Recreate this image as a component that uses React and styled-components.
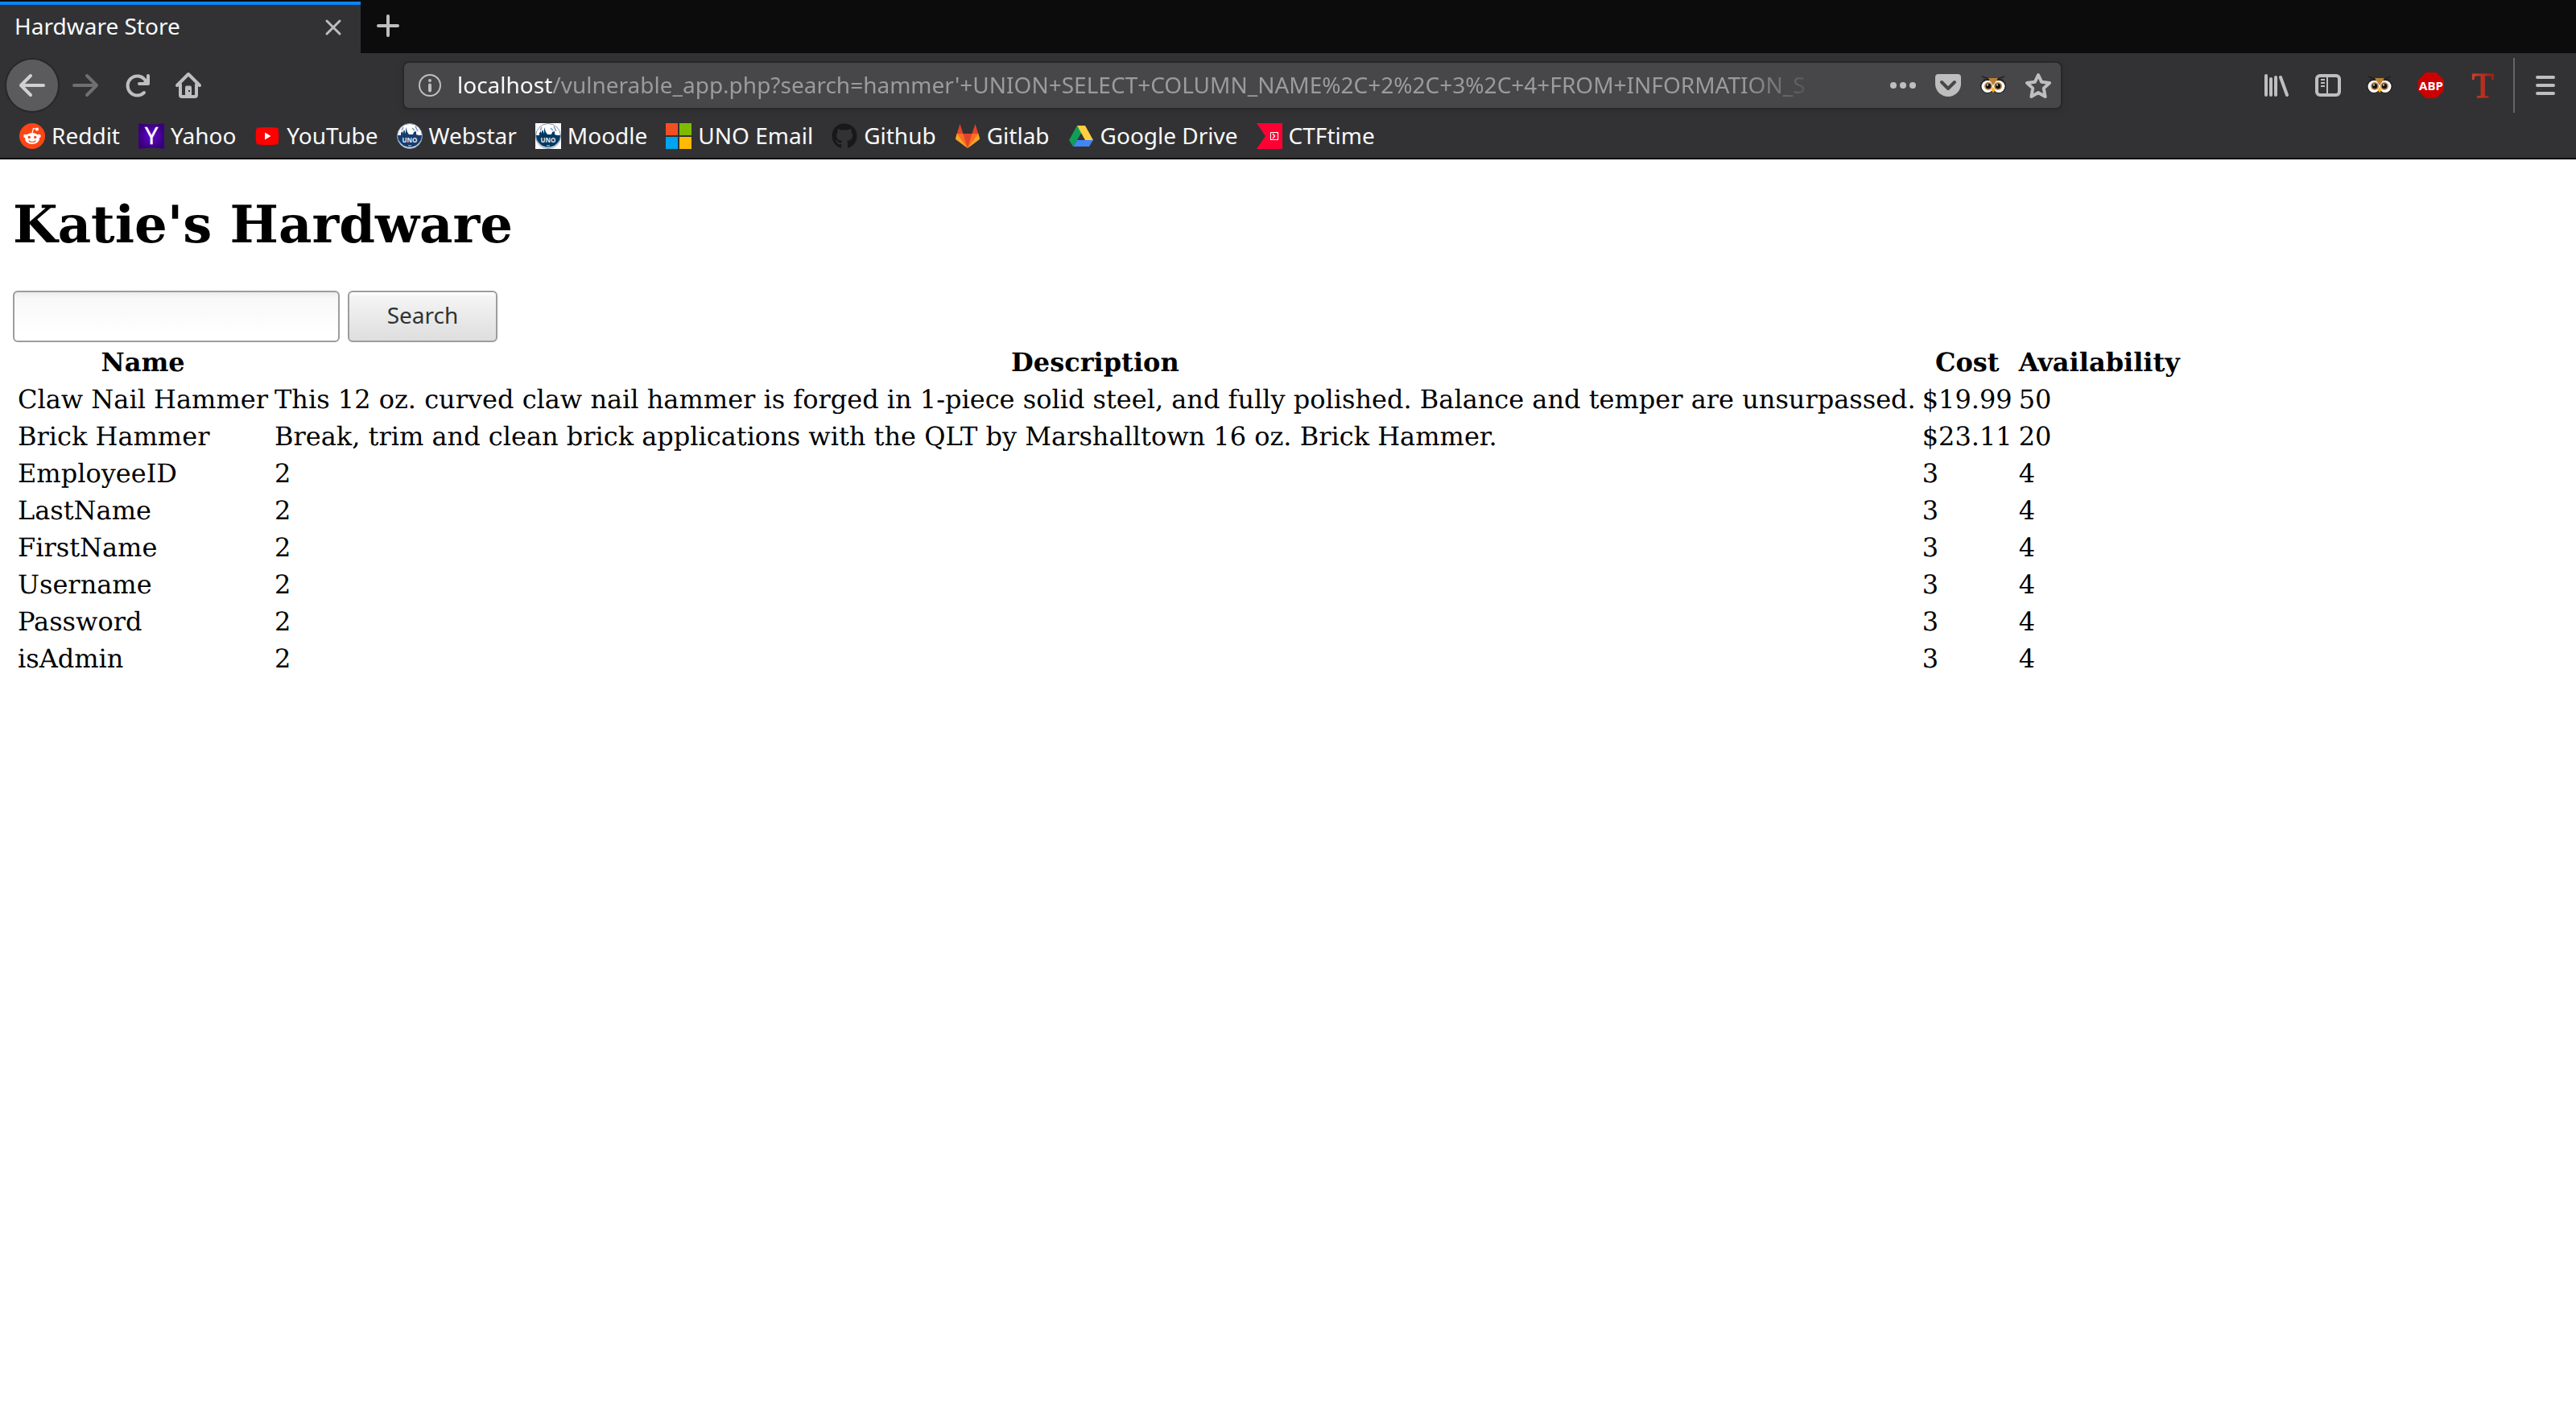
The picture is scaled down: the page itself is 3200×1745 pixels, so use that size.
import React from "react";
import styled, { createGlobalStyle } from "styled-components";
import { FaGithub } from "react-icons/fa";

const uiFont = '"Noto Sans", "Open Sans", sans-serif';
const pageFont = '"DejaVu Serif", "Liberation Serif", serif';

const GlobalStyle = createGlobalStyle`
  *, *::before, *::after { box-sizing: border-box; }
  body { margin: 0; background: #ffffff; }
  svg { display: block; flex: none; overflow: visible; }
`;

const Chrome = styled.header`
  background: #323234;
  border-bottom: 2px solid #0c0c0d;
  font-family: ${uiFont};
  font-size: 28px;
  line-height: 38px;
  color: #f9f9fa;
`;

const TabStrip = styled.div`
  display: flex;
  height: 66px;
  padding-top: 2px;
  background: #0c0c0d;
`;

const Tab = styled.div`
  display: flex;
  align-items: center;
  justify-content: space-between;
  width: 448px;
  padding: 0 16px 4px 18px;
  background: #323234;
  border-top: 4px solid #0a84ff;
`;

const TabTitle = styled.span`
  padding-bottom: 4px;
`;

const IconButton = styled.button`
  display: flex;
  align-items: center;
  justify-content: center;
  flex: none;
  width: ${(p) => p.$width || 64}px;
  height: ${(p) => p.$height || 64}px;
  padding: 0;
  border: 0;
  background: none;
  color: ${(p) => (p.$dim ? "#6f6f71" : "#bebebf")};
`;

const NewTabButton = styled(IconButton)`
  padding-bottom: 4px;
`;

const BackButton = styled(IconButton)`
  margin-right: 2px;
  border-radius: 50%;
  background: #5b5b5d;
  box-shadow: 0 0 0 2px #28282a;
  color: #d0d0d1;
`;

const NavBar = styled.nav`
  display: flex;
  align-items: center;
  height: 80px;
  padding: 0 6px 0 8px;
`;

const Spacer = styled.div`
  flex: 0 1 234px;
`;

const Address = styled.form`
  display: flex;
  align-items: center;
  flex: 1;
  min-width: 0;
  height: 60px;
  padding-left: 4px;
  border: 2px solid #28282a;
  border-radius: 8px;
  background: #474749;
  box-shadow: 0 2px 8px rgba(0, 0, 0, 0.1);
  color: #b1b1b3;
`;

const AddressText = styled.div`
  display: flex;
  flex: 1;
  min-width: 0;
  margin: 0 60px 0 6px;
  padding-bottom: 2px;
  mask-image: linear-gradient(to left, transparent 16px, #000 112px);
`;

const Host = styled.label`
  color: #f9f9fa;
`;

const Path = styled.input`
  flex: 1;
  min-width: 0;
  height: 38px;
  padding: 0;
  border: 0;
  outline: 0;
  background: none;
  color: #9b9b9d;
  font: inherit;
`;

const Divider = styled.div`
  width: 2px;
  height: 68px;
  margin: 0 6px;
  background: #656567;
`;

const Bookmarks = styled.nav`
  display: flex;
  gap: 23px;
  height: 50px;
  padding: 4px 24px 0;
`;

const Bookmark = styled.a`
  display: flex;
  align-items: center;
  gap: 8px;
  height: 38px;
  color: inherit;
  text-decoration: none;
  white-space: nowrap;
`;

const BookmarkLabel = styled.span`
  padding-bottom: 2px;
`;

const Page = styled.main`
  padding: 0 16px;
  font-family: ${pageFont};
  font-size: 32px;
  line-height: 38px;
  text-rendering: geometricPrecision;
  color: #000000;
`;

const Heading = styled.h1`
  margin: 0;
  padding: 44px 0 43px;
  font-size: 64px;
  line-height: 76px;
`;

const SearchForm = styled.form`
  display: flex;
  gap: 10px;
`;

const SearchInput = styled.input`
  width: 406px;
  height: 64px;
  padding: 0 12px;
  border: 2px solid #9d9d9d;
  border-radius: 6px;
  background: linear-gradient(#ececec, #f8f8f8 12%, #ffffff 90%);
  font-family: ${uiFont};
  font-size: 28px;
`;

const SearchButton = styled.button`
  width: 186px;
  height: 64px;
  padding: 0 0 4px;
  border: 2px solid #9d9d9d;
  border-radius: 6px;
  background: linear-gradient(#ffffff, #f4f4f4 10%, #dedede);
  color: #2e3436;
  font-family: ${uiFont};
  font-size: 28px;
`;

const Table = styled.table`
  border-spacing: 4px;
  th, td { padding: 2px; white-space: nowrap; }
  td { text-align: left; }
`;

const Icon = ({ size = 32, children }) => (
  <svg width={size} height={size} viewBox="0 0 32 32" fill="none" aria-hidden="true">
    {children}
  </svg>
);

const stroke = { stroke: "currentColor", strokeWidth: 4, strokeLinecap: "round", strokeLinejoin: "round" };

const CloseIcon = () => <Icon><path d="M8 8l16 16M24 8L8 24" {...stroke} strokeWidth={3} /></Icon>;
const PlusIcon = () => <Icon><path d="M16 4v24M4 16h24" {...stroke} /></Icon>;
const BackIcon = () => <Icon><path d="M30 16H2M14 4L2 16l12 12" {...stroke} /></Icon>;
const ForwardIcon = () => <Icon><path d="M2 16h28M18 4l12 12-12 12" {...stroke} /></Icon>;
const ReloadIcon = () => (
  <Icon>
    <path d="M25 25A12 12 0 1 1 26 9" {...stroke} />
    <path d="M30 4v10H19" {...stroke} />
    <path d="M30 6v8h-8z" fill="currentColor" />
  </Icon>
);
const HomeIcon = () => (
  <Icon>
    <path d="M2 16L16 2l14 14M6 15v13a2 2 0 0 0 2 2h16a2 2 0 0 0 2-2V15" {...stroke} />
    <path d="M12 30V18.500a2 2 0 0 1 2-2h4a2 2 0 0 1 2 2V30z" fill="currentColor" />
    <rect x="16" y="22" width="2" height="2" fill="#323234" />
  </Icon>
);
const InfoIcon = () => (
  <Icon>
    <circle cx="16" cy="16" r="13" stroke="currentColor" strokeWidth="2" />
    <circle cx="16" cy="10" r="2" fill="currentColor" />
    <path d="M16 15.500v7" {...stroke} />
  </Icon>
);
const DotsIcon = () => (
  <Icon>
    <g fill="currentColor"><circle cx="4" cy="16" r="4" /><circle cx="16" cy="16" r="4" /><circle cx="28" cy="16" r="4" /></g>
  </Icon>
);
const PocketIcon = () => (
  <Icon>
    <path d="M4 2h24a4 4 0 0 1 4 4v8a16 16 0 0 1-32 0V6a4 4 0 0 1 4-4z" fill="currentColor" />
    <path d="M8 12l8 8 8-8" {...stroke} stroke="#474749" />
  </Icon>
);
const StarIcon = () => (
  <Icon><path d="M16 3l4.200 8.800 9.800 1.200-7.200 6.600L24.600 30 16 25l-8.600 5 1.800-10.400L2 13l9.800-1.200z" {...stroke} /></Icon>
);
const LibraryIcon = () => (
  <Icon><path d="M3 4v24M9 8v20M15 6v22M21 6l8 22" {...stroke} /></Icon>
);
const SidebarIcon = () => (
  <Icon>
    <rect x="2" y="4" width="28" height="24" rx="4" stroke="currentColor" strokeWidth="4" />
    <path d="M15 4v24M7 9h5M7 13h5M7 17h5" stroke="currentColor" strokeWidth="2" />
  </Icon>
);
const MenuIcon = () => <Icon><path d="M6 6h20M6 16h20M6 26h20" {...stroke} /></Icon>;

const OwlIcon = () => (
  <Icon>
    <circle cx="9" cy="17" r="9" fill="#242021" />
    <circle cx="23" cy="17" r="9" fill="#242021" />
    <path d="M8 7h16l-8 12z" fill="#b98035" />
    <path d="M2 5l12 4-5-1M30 5l-12 4 5-1M4 9l7 1M28 9l-7 1" stroke="#242021" strokeWidth="1.500" />
    <circle cx="9" cy="17.500" r="7.500" fill="#ffffff" />
    <circle cx="23" cy="17.500" r="7.500" fill="#ffffff" />
    <path d="M10 7h12l-6 9z" fill="#b98035" />
    <circle cx="10" cy="17" r="5" fill="#bd8748" />
    <circle cx="22" cy="17" r="5" fill="#bd8748" />
    <circle cx="10" cy="17" r="3.200" fill="#171314" />
    <circle cx="22" cy="17" r="3.200" fill="#171314" />
    <circle cx="9" cy="15.500" r="1" fill="#ffffff" />
    <circle cx="21" cy="15.500" r="1" fill="#ffffff" />
    <path d="M16 18l2.500 4L16 25l-2.500-3z" fill="#ffb515" />
  </Icon>
);
const AbpIcon = () => (
  <Icon>
    <path d="M9.500 0h13L32 9.500v13L22.500 32h-13L0 22.500v-13z" fill="#cc0000" />
    <text x="16" y="22" textAnchor="middle" fill="#ffffff" fontFamily="Open Sans, sans-serif" fontWeight="700" fontSize="15">ABP</text>
  </Icon>
);
const TamperIcon = () => (
  <Icon>
    <defs>
      <linearGradient id="tamper" x1="0" y1="0" x2="1" y2="0"><stop offset="0" stopColor="#d5402c" /><stop offset="1" stopColor="#9c1f10" /></linearGradient>
    </defs>
    <text x="16" y="31" textAnchor="middle" fill="url(#tamper)" stroke="url(#tamper)" fontFamily="Liberation Serif, serif" fontSize="44">T</text>
  </Icon>
);
const RedditIcon = () => (
  <Icon>
    <circle cx="16" cy="16" r="16" fill="#ff4515" />
    <g fill="#ffffff">
      <ellipse cx="16" cy="19" rx="9" ry="7" />
      <circle cx="7.500" cy="16" r="2.300" /><circle cx="24.500" cy="16" r="2.300" />
      <circle cx="22" cy="7.500" r="1.900" />
    </g>
    <path d="M16 12l1.500-5.500L22 7.500" stroke="#ffffff" strokeWidth="1.200" />
    <circle cx="12.300" cy="17.500" r="1.700" fill="#ff4515" /><circle cx="19.700" cy="17.500" r="1.700" fill="#ff4515" />
    <path d="M12 22c2 2 6 2 8 0" stroke="#ff4515" strokeWidth="1.200" strokeLinecap="round" />
  </Icon>
);
const YahooIcon = () => (
  <Icon>
    <defs><radialGradient id="yahoo"><stop offset="0" stopColor="#6500d6" /><stop offset="1" stopColor="#39007d" /></radialGradient></defs>
    <path d="M0 0q16 3 32 0v32q-16-3-32 0z" fill="url(#yahoo)" />
    <text x="16" y="26" textAnchor="middle" fill="#ffffff" stroke="#ffffff" strokeWidth="0.500" fontFamily="Open Sans, sans-serif" fontSize="29">Y</text>
  </Icon>
);
const YoutubeIcon = () => (
  <Icon>
    <path d="M5 5.500q11-1 22 0 3 0 3 4 .600 6 0 13 0 4-3 4-11 1-22 0-3 0-3-4-.600-7 0-13 0-4 3-4z" fill="#ff0000" />
    <path d="M13 11.500l7.500 4.500-7.500 4.500z" fill="#ffffff" />
  </Icon>
);
const UnoIcon = ({ base, square }) => (
  <Icon>
    {square && <rect width="32" height="32" fill="#ffffff" />}
    <circle cx="16" cy="16" r="15.500" fill="#ffffff" stroke="#8195b3" />
    <path d="M1 15h4v-3l2-2v3l2-5 2 5V5l2 6 2 3h5l1-3 3-1v4l3 1h4a15 15 0 0 1-30 0z" fill={base} />
    <path d="M6 9l2-4M19 6l3 3M23 4l3 6" stroke="#8195b3" strokeWidth="1.500" />
    <text x="16" y="24" textAnchor="middle" fill="#e5ebf3" fontFamily="Open Sans, sans-serif" fontWeight="700" fontSize="8">UNO</text>
    <path d="M14 28h4" stroke="#7990b0" strokeWidth="2" />
  </Icon>
);
const MicrosoftIcon = () => (
  <Icon>
    <path d="M0 0h15v15H0z" fill="#f25022" /><path d="M17 0h15v15H17z" fill="#7fba00" />
    <path d="M0 17h15v15H0z" fill="#00a4ef" /><path d="M17 17h15v15H17z" fill="#ffb900" />
  </Icon>
);
const GitlabIcon = () => (
  <Icon>
    <path d="M16 31L1 19.500 2.700 13h26.600L31 19.500z" fill="#fc6d26" />
    <path d="M16 31L10.500 13h11z" fill="#e24329" />
    <path d="M2.700 13L6.500 1l4 12zM29.300 13L25.500 1l-4 12z" fill="#e24329" />
    <path d="M16 31L1.800 20.600q-1-.800-.600-2L2.700 13zM16 31l14.200-10.400q1-.800.600-2L29.300 13z" fill="#fca326" />
  </Icon>
);
const DriveIcon = () => (
  <Icon>
    <path d="M11 3l5.500 9L6 29 1 21z" fill="#109d58" />
    <path d="M11 3h10l10 18H21z" fill="#ffcd42" />
    <path d="M11 21h20l-5 8H6z" fill="#4285f4" />
  </Icon>
);
const CtfIcon = () => (
  <Icon>
    <path d="M0 0h32v32H0l11-16z" fill="#ff0035" />
    <rect x="17.500" y="11.500" width="9" height="9" stroke="#ffffff" />
    <path d="M20 13l2.500 3-2.500 3" stroke="#ffffff" strokeWidth="1.300" />
  </Icon>
);

const bookmarks = [
  ["Reddit", <RedditIcon />],
  ["Yahoo", <YahooIcon />],
  ["YouTube", <YoutubeIcon />],
  ["Webstar", <UnoIcon base="#173e70" />],
  ["Moodle", <UnoIcon base="#003a63" square />],
  ["UNO Email", <MicrosoftIcon />],
  ["Github", <FaGithub size={32} color="#191717" />],
  ["Gitlab", <GitlabIcon />],
  ["Google Drive", <DriveIcon />],
  ["CTFtime", <CtfIcon />],
];

const columns = ["Name", "Description", "Cost", "Availability"];

const rows = [
  ["Claw Nail Hammer", "This 12 oz. curved claw nail hammer is forged in 1-piece solid steel, and fully polished. Balance and temper are unsurpassed.", "$19.99", "50"],
  ["Brick Hammer", "Break, trim and clean brick applications with the QLT by Marshalltown 16 oz. Brick Hammer.", "$23.11", "20"],
  ...["EmployeeID", "LastName", "FirstName", "Username", "Password", "isAdmin"].map((name) => [name, "2", "3", "4"]),
];

const stop = (event) => event.preventDefault();

export default function App() {
  return (
    <>
      <GlobalStyle />
      <Chrome>
        <TabStrip>
          <Tab>
            <TabTitle>Hardware Store</TabTitle>
            <IconButton $width={36} $height={36} aria-label="Close tab"><CloseIcon /></IconButton>
          </Tab>
          <NewTabButton $width={68} aria-label="New tab"><PlusIcon /></NewTabButton>
        </TabStrip>
        <NavBar aria-label="Navigation">
          <BackButton aria-label="Back"><BackIcon /></BackButton>
          <IconButton $dim aria-label="Forward"><ForwardIcon /></IconButton>
          <IconButton aria-label="Reload"><ReloadIcon /></IconButton>
          <IconButton aria-label="Home"><HomeIcon /></IconButton>
          <Spacer />
          <Address onSubmit={stop}>
            <IconButton type="button" $width={56} $height={56} aria-label="Site information"><InfoIcon /></IconButton>
            <AddressText>
              <Host htmlFor="address">localhost</Host>
              <Path
                id="address"
                defaultValue="/vulnerable_app.php?search=hammer'+UNION+SELECT+COLUMN_NAME%2C+2%2C+3%2C+4+FROM+INFORMATION_S"
              />
            </AddressText>
            <IconButton type="button" $width={56} $height={56} aria-label="Page actions"><DotsIcon /></IconButton>
            <IconButton type="button" $width={56} $height={56} aria-label="Save to Pocket"><PocketIcon /></IconButton>
            <IconButton type="button" $width={56} $height={56} aria-label="Owl"><OwlIcon /></IconButton>
            <IconButton type="button" $width={56} $height={56} aria-label="Bookmark this page"><StarIcon /></IconButton>
          </Address>
          <Spacer />
          <IconButton aria-label="Library"><LibraryIcon /></IconButton>
          <IconButton aria-label="Sidebars"><SidebarIcon /></IconButton>
          <IconButton aria-label="Owl"><OwlIcon /></IconButton>
          <IconButton aria-label="Adblock Plus"><AbpIcon /></IconButton>
          <IconButton aria-label="Tamper data"><TamperIcon /></IconButton>
          <Divider />
          <IconButton aria-label="Menu"><MenuIcon /></IconButton>
        </NavBar>
        <Bookmarks aria-label="Bookmarks">
          {bookmarks.map(([label, icon]) => (
            <Bookmark key={label} href="#">{icon}<BookmarkLabel>{label}</BookmarkLabel></Bookmark>
          ))}
        </Bookmarks>
      </Chrome>
      <Page>
        <Heading>Katie's Hardware</Heading>
        <SearchForm onSubmit={stop}>
          <SearchInput type="text" aria-label="Search products" />
          <SearchButton type="submit">Search</SearchButton>
        </SearchForm>
        <Table>
          <thead>
            <tr>{columns.map((name) => <th key={name} scope="col">{name}</th>)}</tr>
          </thead>
          <tbody>
            {rows.map((row) => (
              <tr key={row[0]}>{row.map((cell, i) => <td key={columns[i]}>{cell}</td>)}</tr>
            ))}
          </tbody>
        </Table>
      </Page>
    </>
  );
}
